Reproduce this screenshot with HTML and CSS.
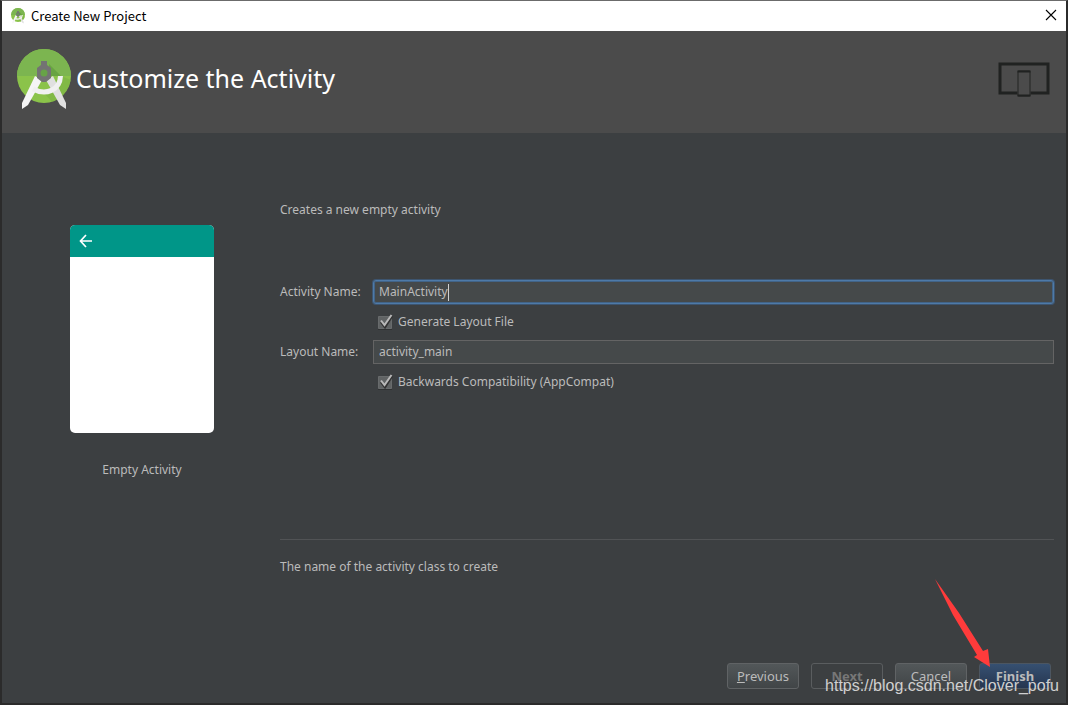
FILE: index.html
```html
<!DOCTYPE html>
<html lang="en">
<head>
<meta charset="utf-8">
<title>Create New Project</title>
<link rel="stylesheet" href="styles.css">
</head>
<body>
<svg class="symbols" aria-hidden="true">
  <symbol id="studio" viewBox="0 0 54 62">
    <clipPath id="disc"><circle cx="27" cy="27" r="27"/></clipPath>
    <circle cx="27" cy="27" r="27" fill="#8bc34a"/>
    <g clip-path="url(#disc)">
      <path d="M0 0h54v27H0z" fill="#7cb550"/>
      <path d="M32 15l12 12H32z" fill="#5f9b3d" opacity=".7"/>
      <path d="M27 44l17-17 10 4v23H36z" fill="#7cb342" opacity=".6"/>
    </g>
    <path d="M29 31l7-4 13 27v6l-6-4z" fill="#e0e0e0"/>
    <path d="M18 27l7 4L11 56l-6 4v-6z" fill="#f5f5f5"/>
    <path d="M16 40c13 7 27 1 27.500-13" fill="none" stroke="#f0f0f0" stroke-width="5"/>
    <path d="M24 12h6v4l4 3v10l-5 4h-4l-5-4V19l4-3z" fill="#737373"/>
    <circle cx="27" cy="24" r="3.500" fill="#67a347"/>
  </symbol>
</svg>
<div class="window">
  <header class="titlebar">
    <svg class="app-icon" aria-hidden="true"><use href="#studio"/></svg>
    <span class="window-title">Create New Project</span>
    <button class="close" aria-label="Close"><svg width="12" height="12" viewBox="0 0 12 12"><path d="M1 1l10 10M11 1L1 11" stroke="#000" stroke-width="1.1"/></svg></button>
  </header>
  <section class="banner">
    <svg class="logo" aria-hidden="true"><use href="#studio"/></svg>
    <h1>Customize the Activity</h1>
    <svg class="devices" width="52" height="36" viewBox="0 0 52 36" aria-hidden="true">
      <rect x="2" y="2" width="48" height="29" fill="none" stroke="#202221" stroke-width="3"/>
      <rect x="20" y="9" width="12" height="25" rx="1" fill="#4b4b4b" stroke="#303231" stroke-width="1.5"/>
      <path d="M19.500 9.500h13M19.500 33.500h13" stroke="#202221" stroke-width="2"/>
    </svg>
  </section>
  <main class="content">
    <figure class="preview">
      <div class="phone">
        <div class="appbar"><svg width="14" height="14" viewBox="0 0 14 14"><path d="M7 1L1.500 7 7 13M1.500 7H13" fill="none" stroke="#fff" stroke-width="1.7"/></svg></div>
      </div>
      <figcaption>Empty Activity</figcaption>
    </figure>
    <form class="form">
      <p class="intro">Creates a new empty activity</p>
      <div class="fields">
        <label for="activity">Activity Name:</label>
        <div class="field active"><input id="activity" type="text" value="MainActivity"><span class="caret"></span></div>
        <label class="check"><input type="checkbox" checked>Generate Layout File</label>
        <label for="layout">Layout Name:</label>
        <div class="field"><input id="layout" type="text" value="activity_main"></div>
        <label class="check"><input type="checkbox" checked>Backwards Compatibility (AppCompat)</label>
      </div>
      <p class="hint">The name of the activity class to create</p>
    </form>
  </main>
  <footer class="actions">
    <button class="btn"><u>P</u>revious</button>
    <button class="btn next" disabled>Next</button>
    <button class="btn">Cancel</button>
    <button class="btn finish">Finish</button>
    <svg class="arrow" width="58" height="90" viewBox="0 0 58 90" aria-hidden="true"><path d="M2 1l24 34 24 38 5-2 2 18-16-10 3-2-24-40z" fill="#ff3b3b"/></svg>
    <span class="watermark">https://blog.csdn.net/Clover_pofu</span>
  </footer>
</div>
</body>
</html>
```
FILE: styles.css
```css
* { box-sizing: border-box; }
body {
  margin: 0;
  background: #2b2b2b;
  color: #bbbbbb;
  font: 12px/18px "Noto Sans", sans-serif;
}
p, h1, figure { margin: 0; }
button, input { font: inherit; color: inherit; }
.symbols { position: absolute; width: 0; height: 0; }
.window {
  min-height: 100vh;
  display: flex;
  flex-direction: column;
  background: #3c3f41;
  border: solid #2b2b2b;
  border-width: 1px 2px 2px;
  border-top-color: #6b6b6b;
}
.titlebar {
  display: flex;
  align-items: center;
  height: 30px;
  padding: 0 8px 0 9px;
  background: #fff;
  color: #000;
  font: 13px/18px "Noto Sans CJK SC", "Noto Sans", sans-serif;
}
.app-icon { width: 14px; height: 16px; margin-right: 6px; }
.close {
  display: grid;
  place-items: center;
  margin-left: auto;
  padding: 0 1px 2px;
  border: 0;
  background: none;
}
.banner {
  display: flex;
  align-items: center;
  height: 102px;
  padding: 0 16px 4px 15px;
  background: #4b4b4b;
}
.logo { width: 54px; height: 62px; margin-right: 5px; }
h1 {
  color: #fff;
  font: 25px/34px "Noto Sans", sans-serif;
  padding-bottom: 4px;
}
.devices { margin-left: auto; }
.content {
  flex: 1;
  display: grid;
  grid-template-columns: 144px 1fr;
  gap: 66px;
  padding: 68px 12px 0 68px;
}
.preview { padding-top: 24px; text-align: center; }
.phone {
  height: 208px;
  margin-bottom: 28px;
  border-radius: 5px;
  background: #fff;
  overflow: hidden;
}
.appbar {
  display: flex;
  align-items: center;
  height: 32px;
  padding-left: 9px;
  background: #009688;
}
.intro { margin-bottom: 61px; }
.fields {
  display: grid;
  grid-template-columns: 84px 1fr;
  grid-auto-rows: 24px;
  row-gap: 6px;
  column-gap: 9px;
  align-items: center;
  white-space: nowrap;
}
.field {
  display: grid;
  position: relative;
  height: 24px;
  border: 1px solid #646464;
  background: #45494a;
}
.field input {
  width: 100%;
  padding: 0 5px;
  border: 0;
  outline: 0;
  background: none;
}
.field.active {
  border-color: #4e7aa8;
  border-radius: 3px;
  box-shadow: inset 0 0 0 1px #426488, 0 0 0 1px #3d5570;
}
.caret {
  position: absolute;
  left: 74px;
  top: 3px;
  width: 1px;
  height: 17px;
  background: #d0d0d0;
}
.check {
  grid-column: 2;
  display: flex;
  align-items: center;
  gap: 5px;
  padding-left: 4px;
}
.check input {
  appearance: none;
  width: 16px;
  height: 16px;
  margin: 0;
  background: url("data:image/svg+xml,%3Csvg xmlns='http://www.w3.org/2000/svg' viewBox='0 0 16 16'%3E%3Cpath d='M1.500 2.500h13v12h-13z' fill='%23606364' stroke='%23686b6c'/%3E%3Cpath d='M1 15.500h14' stroke='%23303233'/%3E%3Cpath d='M4 8l4 5 7-11' fill='none' stroke='%23333' stroke-width='2.500'/%3E%3Cpath d='M4 6.500l3.500 4.500L14.500 1' fill='none' stroke='%23b8b8b8' stroke-width='2'/%3E%3C/svg%3E");
}
.hint {
  margin-top: 145px;
  padding-top: 18px;
  border-top: 1px solid #515355;
}
.actions {
  position: relative;
  display: flex;
  justify-content: flex-end;
  gap: 12px;
  padding: 0 15px 14px;
}
.btn {
  width: 72px;
  height: 26px;
  padding: 0;
  border: 1px solid #606365;
  border-radius: 3px;
  background: linear-gradient(#525759, #414547);
  font-size: 13px;
}
.btn.next {
  border-color: #5a5d5f;
  background: none;
  color: #777777;
  font-weight: 700;
}
.btn.finish {
  border-color: #4c5661;
  background: linear-gradient(#365071, #263650);
  font-weight: 700;
}
.arrow { position: absolute; right: 75px; bottom: 35px; }
.watermark {
  position: absolute;
  right: 7px;
  bottom: 8px;
  color: #d0d0d0;
  font: 16px/18px "Liberation Sans", Arial, sans-serif;
  pointer-events: none;
}
```
